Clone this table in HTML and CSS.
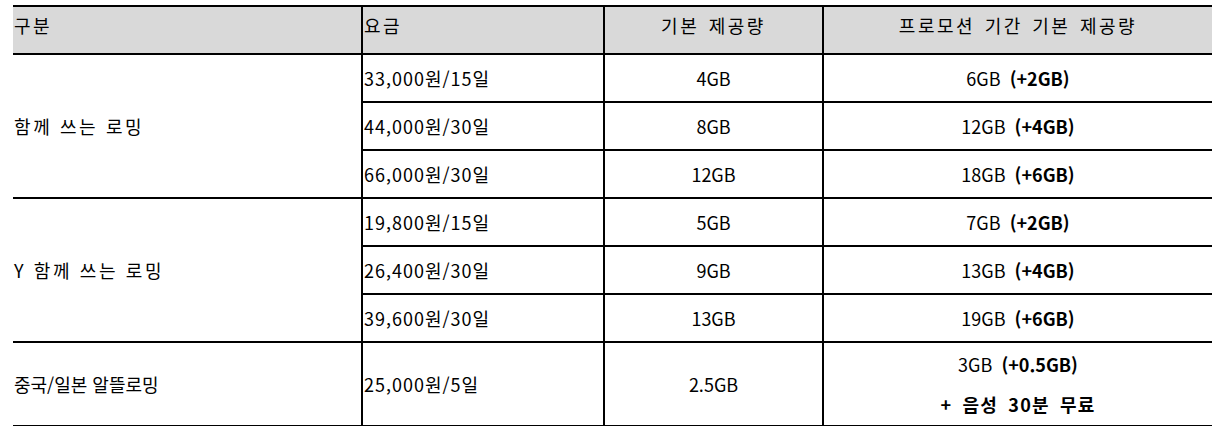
FILE: index.html
```html
<!DOCTYPE html>
<html lang="ko">
<head>
<meta charset="utf-8">
<title>로밍 요금</title>
<link rel="stylesheet" href="styles.css">
</head>
<body>
<table class="rates">
  <colgroup>
    <col class="w1"><col class="w2"><col class="w3"><col class="w4">
  </colgroup>
  <thead>
    <tr class="head">
      <th class="c1">구분</th>
      <th class="c2">요금</th>
      <th class="c3">기본 제공량</th>
      <th class="c4">프로모션 기간 기본 제공량</th>
    </tr>
  </thead>
  <tbody>
    <tr>
      <td class="c1 spaced" rowspan="3">함께 쓰는 로밍</td>
      <td class="c2">33,000원/15일</td>
      <td class="c3">4GB</td>
      <td class="c4">6GB <b>(+2GB)</b></td>
    </tr>
    <tr>
      <td class="c2">44,000원/30일</td>
      <td class="c3">8GB</td>
      <td class="c4">12GB <b>(+4GB)</b></td>
    </tr>
    <tr>
      <td class="c2">66,000원/30일</td>
      <td class="c3">12GB</td>
      <td class="c4">18GB <b>(+6GB)</b></td>
    </tr>
    <tr>
      <td class="c1 spaced" rowspan="3">Y 함께 쓰는 로밍</td>
      <td class="c2">19,800원/15일</td>
      <td class="c3">5GB</td>
      <td class="c4">7GB <b>(+2GB)</b></td>
    </tr>
    <tr>
      <td class="c2">26,400원/30일</td>
      <td class="c3">9GB</td>
      <td class="c4">13GB <b>(+4GB)</b></td>
    </tr>
    <tr>
      <td class="c2">39,600원/30일</td>
      <td class="c3">13GB</td>
      <td class="c4">19GB <b>(+6GB)</b></td>
    </tr>
    <tr class="last">
      <td class="c1">중국/일본 알뜰로밍</td>
      <td class="c2">25,000원/5일</td>
      <td class="c3">2.5GB</td>
      <td class="c4">
        <p class="line">3GB <b>(+0.5GB)</b></p>
        <p class="line extra"><b>+ 음성 30분 무료</b></p>
      </td>
    </tr>
  </tbody>
</table>
</body>
</html>
```

FILE: styles.css
```css
html, body {
  margin: 0;
  padding: 0;
  background: #fff;
}
body {
  padding: 5px 0 0 13px;
  font-family: "Noto Sans CJK KR", "Noto Sans", sans-serif;
  font-size: 18px;
  color: #000;
}
.rates {
  border-collapse: collapse;
  table-layout: fixed;
  width: 1199px;
}
.w1 { width: 349px; }
.w2 { width: 242px; }
.w3 { width: 219px; }
.w4 { width: 389px; }

.rates th,
.rates td {
  border-top: 2px solid #000;
  border-left: 2px solid #000;
  padding: 0;
  height: 46px;
  line-height: 20px;
  vertical-align: middle;
  font-weight: normal;
  word-spacing: 4px;
}
.rates .c1 { border-left: none; text-align: left; padding-left: 1px; word-spacing: 0; }
.rates .c1.spaced { letter-spacing: 2.6px; }
.rates .c2 { text-align: left; padding-left: 1px; letter-spacing: 1px; }
.rates .c3, .rates .c4 { text-align: center; }
.head th {
  background: #d9d9d9;
  border-bottom: 2px solid #000;
  vertical-align: top;
  padding-top: 8px;
  height: 38px;
  letter-spacing: 2.5px;
  word-spacing: 2px;
}
.rates .head .c1 { word-spacing: 2px; }
.rates .head .c2 { letter-spacing: 2.5px; }
.rates b { font-weight: bold; }
.last td {
  height: 82px;
  border-bottom: 1px solid #000;
}
.line { margin: 0; line-height: 20px; }
.line + .line { margin-top: 20px; }
.extra { letter-spacing: 1.2px; word-spacing: 4px; }
```
